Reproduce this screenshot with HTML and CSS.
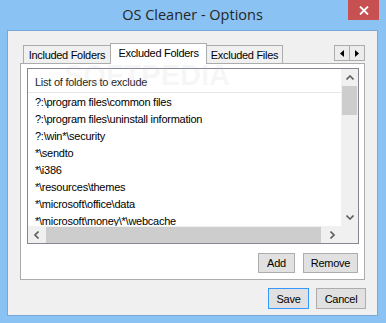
FILE: index.html
```html
<!DOCTYPE html>
<html lang="en">
<head>
    <meta charset="UTF-8">
    <title>OS Cleaner - Options</title>
    <link rel="stylesheet" href="styles.css">
</head>
<body>
    <div class="window">
        <div class="titlebar">
            <span class="title">OS Cleaner - Options</span>
            <div class="close">
                <svg width="10" height="9" viewBox="0 0 10 9"><path d="M1 0.5 L9 8.5 M9 0.5 L1 8.5" stroke="#fff" stroke-width="1.8"/></svg>
            </div>
        </div>

        <div class="client">
            <div class="tabstrip">
                <div class="tab tab-first">Included Folders</div>
                <div class="tab active">Excluded Folders</div>
                <div class="tab tab-files">Excluded Files</div>
                <div class="tab-scroll">
                    <span class="tab-arrow"><svg width="4" height="7" viewBox="0 0 4 7"><path d="M4 0 L0 3.5 L4 7 Z" fill="#000"/></svg></span>
                    <span class="tab-arrow"><svg width="4" height="7" viewBox="0 0 4 7"><path d="M0 0 L4 3.5 L0 7 Z" fill="#000"/></svg></span>
                </div>
            </div>

            <div class="tabpage">
                <div class="listview">
                    <div class="list-main">
                        <div class="list-header">List of folders to exclude</div>
                        <div class="list-row">?:\program files\common files</div>
                        <div class="list-row">?:\program files\uninstall information</div>
                        <div class="list-row">?:\win*\security</div>
                        <div class="list-row">*\sendto</div>
                        <div class="list-row">*\i386</div>
                        <div class="list-row">*\resources\themes</div>
                        <div class="list-row">*\microsoft\office\data</div>
                        <div class="list-row">*\microsoft\money\*\webcache</div>
                    </div>
                    <div class="vscroll">
                        <span class="sb-btn"><svg width="8" height="5" viewBox="0 0 8 5"><path d="M0.5 4.5 L4 1 L7.5 4.5" fill="none" stroke="#606060" stroke-width="1.6"/></svg></span>
                        <span class="vthumb"></span>
                        <span class="sb-fill"></span>
                        <span class="sb-btn"><svg width="8" height="5" viewBox="0 0 8 5"><path d="M0.5 0.5 L4 4 L7.5 0.5" fill="none" stroke="#606060" stroke-width="1.6"/></svg></span>
                    </div>
                    <div class="hscroll">
                        <span class="sb-btn"><svg width="5" height="8" viewBox="0 0 5 8"><path d="M4.5 0.5 L1 4 L4.5 7.5" fill="none" stroke="#606060" stroke-width="1.6"/></svg></span>
                        <span class="hthumb"></span>
                        <span class="sb-fill"></span>
                        <span class="sb-btn"><svg width="5" height="8" viewBox="0 0 5 8"><path d="M0.5 0.5 L4 4 L0.5 7.5" fill="none" stroke="#606060" stroke-width="1.6"/></svg></span>
                    </div>
                    <div class="corner"></div>
                </div>

                <div class="page-buttons">
                    <button class="btn btn-add">Add</button>
                    <button class="btn btn-remove">Remove</button>
                </div>
            </div>

            <div class="footer">
                <button class="btn btn-save">Save</button>
                <button class="btn btn-cancel">Cancel</button>
            </div>

            <span class="watermark">SOFTPEDIA</span>
        </div>
    </div>
</body>
</html>
```

FILE: styles.css
```css
body {
    margin: 0;
    font-family: 'Liberation Sans', Arial, sans-serif;
    font-size: 11px;
    letter-spacing: -0.25px;
    color: #000;
}
.window {
    position: relative;
    width: 386px;
    height: 323px;
    box-sizing: border-box;
    padding: 0 8px 7px 7px;
    background: #8ac2f4;
    display: flex;
    flex-direction: column;
}
.titlebar {
    height: 30px;
    flex-shrink: 0;
    display: flex;
    align-items: center;
    justify-content: center;
}
.title {
    font-family: 'Open Sans', sans-serif;
    font-size: 14.5px;
    letter-spacing: 0;
    color: #262626;
    margin-top: -1px;
}
.close {
    position: absolute;
    top: 0;
    right: 7px;
    width: 31px;
    height: 20px;
    background: #c75050;
    display: flex;
    align-items: center;
    justify-content: center;
}
.client {
    position: relative;
    flex: 1;
    border: 1px solid #78a8d8;
    background: #f0f0f0;
    padding: 12px 12px 0 12px;
    display: flex;
    flex-direction: column;
}
.tabstrip {
    height: 20px;
    padding-left: 3px;
    display: flex;
    align-items: flex-end;
}
.tab {
    height: 18px;
    box-sizing: border-box;
    border: 1px solid #acacac;
    border-bottom: 0;
    background: #f0f0f0;
    display: flex;
    align-items: center;
    justify-content: center;
    letter-spacing: -0.3px;
    white-space: nowrap;
}
.tab-first {
    width: 88px;
}
.tab.active {
    width: 97px;
    height: 21px;
    margin-left: -1px;
    margin-bottom: -1px;
    padding-bottom: 2px;
    background: #fff;
    position: relative;
    z-index: 1;
}
.tab-files {
    width: 77px;
    margin-left: -1px;
}
.tab-scroll {
    margin-left: auto;
    align-self: flex-start;
    margin-top: 2px;
    display: flex;
}
.tab-arrow {
    width: 16px;
    height: 16px;
    box-sizing: border-box;
    border: 1px solid #acacac;
    background: #ececec;
    display: flex;
    align-items: center;
    justify-content: center;
}
.tab-arrow + .tab-arrow {
    margin-left: -1px;
}
.tabpage {
    height: 217px;
    box-sizing: border-box;
    border: 1px solid #acacac;
    background: #fff;
    padding: 4px 5px 0 6px;
    display: flex;
    flex-direction: column;
}
.listview {
    height: 176px;
    box-sizing: border-box;
    border: 1px solid #828790;
    display: grid;
    grid-template-columns: 1fr 17px;
    grid-template-rows: 1fr 17px;
    background: #fff;
}
.list-main {
    overflow: hidden;
    min-width: 0;
    min-height: 0;
}
.list-header {
    height: 24px;
    box-sizing: border-box;
    padding: 2px 0 0 7px;
    margin-bottom: 1px;
    border-bottom: 1px solid #e5e7eb;
    display: flex;
    align-items: center;
    color: #1e1e1e;
}
.list-row {
    height: 17px;
    line-height: 17px;
    padding-left: 7px;
    white-space: nowrap;
}
.vscroll {
    background: #f0f0f0;
    display: flex;
    flex-direction: column;
}
.hscroll {
    background: #f0f0f0;
    display: flex;
}
.sb-btn {
    flex: 0 0 17px;
    display: flex;
    align-items: center;
    justify-content: center;
}
.sb-fill {
    flex: 1;
}
.vthumb {
    height: 29px;
    margin: 0 1px;
    background: #cdcdcd;
}
.hthumb {
    width: 275px;
    margin: 1px 0 0 1px;
    background: #cdcdcd;
}
.corner {
    background: #f0f0f0;
}
.page-buttons {
    margin-top: 9px;
    padding-right: 1px;
    display: flex;
    justify-content: flex-end;
    gap: 8px;
}
.btn {
    height: 20px;
    box-sizing: border-box;
    border: 1px solid #adadad;
    background: #e1e1e1;
    padding: 0;
    font: inherit;
    letter-spacing: inherit;
    color: #000;
}
.btn-add {
    width: 37px;
}
.btn-remove {
    width: 55px;
}
.footer {
    margin-top: 8px;
    margin-right: -1px;
    display: flex;
    justify-content: flex-end;
    gap: 7px;
}
.btn-save,
.btn-cancel {
    height: 21px;
}
.btn-save {
    width: 41px;
    border-color: #3399ff;
}
.btn-cancel {
    width: 50px;
}
.watermark {
    position: absolute;
    left: 56px;
    top: 28px;
    font-size: 29px;
    font-weight: bold;
    letter-spacing: 0;
    color: rgba(190, 190, 190, 0.12);
    pointer-events: none;
}
```
